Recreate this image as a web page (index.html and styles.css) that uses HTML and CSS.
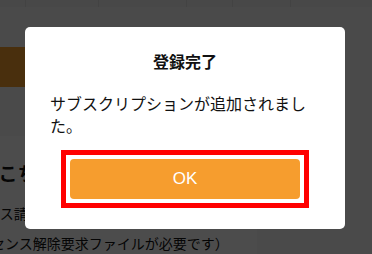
FILE: index.html
```html
<!DOCTYPE html>
<html lang="ja">
<head>
    <meta charset="UTF-8">
    <meta name="viewport" content="width=device-width, initial-scale=1.0">
    <title>登録完了</title>
    <link rel="stylesheet" href="styles.css">
</head>
<body>
    <div class="page">
        <div class="tabs">
            <div class="tab w1"></div>
            <div class="tab w2"></div>
            <div class="tab w3"></div>
            <div class="tab w4"></div>
            <div class="tab w5"></div>
            <div class="tab w6"></div>
        </div>
        <div class="action-bar">
            <div class="page-button"></div>
        </div>
        <div class="card">
            <div class="card-title">ライセンス解除はこちら</div>
            <p class="card-text">ライセンス請求書</p>
            <p class="card-note">（ライセンス解除要求ファイルが必要です）</p>
        </div>
    </div>

    <div class="overlay">
        <div class="dialog">
            <div class="dialog-title">登録完了</div>
            <div class="dialog-message">サブスクリプションが追加されました。</div>
            <div class="focus-ring">
                <button class="ok-button">OK</button>
            </div>
        </div>
    </div>
</body>
</html>
```

FILE: styles.css
```css
body {
    margin: 0;
    padding: 0;
    width: 372px;
    height: 254px;
    overflow: hidden;
    background-color: #f7f7f7;
    font-family: "Noto Sans CJK JP", "Noto Sans", sans-serif;
    color: #111;
}
.page {
    width: 372px;
    height: 254px;
    overflow: hidden;
}
.tabs {
    display: flex;
    height: 7px;
    background-color: #f2f2f2;
}
.tab {
    height: 7px;
    border-right: 1px solid #e2e2e2;
}
.w1 { width: 25px; }
.w2 { width: 72px; }
.w3 { width: 87px; }
.w4 { width: 45px; }
.w5 { width: 57px; }
.w6 { width: 80px; border-right: none; }
.action-bar {
    padding-top: 40px;
    height: 89px;
}
.page-button {
    width: 200px;
    height: 40px;
    border-radius: 0 4px 4px 0;
    background-color: #f69d2e;
}
.card {
    width: 257px;
    height: 118px;
    background-color: #fff;
    padding-top: 27px;
    box-sizing: border-box;
    overflow: hidden;
}
.card-title {
    font-size: 19px;
    font-weight: bold;
    line-height: 20px;
    margin-left: -153px;
    white-space: nowrap;
}
.card-text {
    margin: 20px 0 0 -56px;
    font-size: 14px;
    line-height: 20px;
    white-space: nowrap;
}
.card-note {
    margin: 10px 0 0 -51px;
    font-size: 14px;
    line-height: 20px;
    white-space: nowrap;
}
.overlay {
    position: fixed;
    top: 0;
    left: 0;
    right: 0;
    bottom: 0;
    background-color: rgba(0, 0, 0, 0.7);
    display: flex;
    align-items: flex-start;
    padding: 27px 0 0 25px;
}
.dialog {
    width: 320px;
    box-sizing: border-box;
    padding: 22px 25px 21px;
    background-color: #fff;
    border-radius: 5px;
}
.dialog-title {
    text-align: center;
    font-size: 16px;
    font-weight: bold;
    line-height: 24px;
}
.dialog-message {
    margin-top: 19px;
    font-size: 16px;
    line-height: 22px;
}
.focus-ring {
    width: 248px;
    margin: 14px auto 0;
    padding: 4px;
    border: 5px solid #ff0000;
    box-sizing: border-box;
}
.ok-button {
    display: block;
    width: 230px;
    height: 40px;
    border: none;
    border-radius: 4px;
    background-color: #f69d2e;
    color: #fff;
    font-family: "Liberation Sans", Arial, sans-serif;
    font-size: 17px;
}
```
